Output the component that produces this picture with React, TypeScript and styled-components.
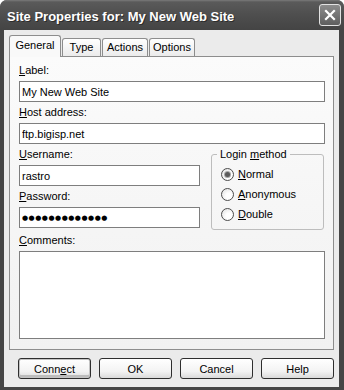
import React from "react";
import styled, { createGlobalStyle } from "styled-components";

const Global = createGlobalStyle`
  html, body { margin: 0; padding: 0; background: #ffffff; }
  body {
    font-family: "Liberation Sans", Arial, sans-serif;
    font-size: 11px;
    color: #000;
  }
`;

const Window = styled.div`
  width: 344px;
  height: 390px;
  box-sizing: border-box;
  background: #454545;
  border-radius: 7px 7px 0 0;
  display: flex;
  flex-direction: column;
  overflow: hidden;
`;

const TitleBar = styled.div`
  height: 30px;
  flex: none;
  box-sizing: border-box;
  display: flex;
  align-items: center;
  justify-content: space-between;
  padding: 0 3px 0 7px;
  background: linear-gradient(#7a7a7a 0, #5a5a5a 2px, #4e4e4e 50%, #444 100%);
`;

const Title = styled.div`
  color: #fff;
  font-weight: bold;
  font-size: 13px;
  line-height: 16px;
  padding-top: 4px;
  text-shadow: 1px 1px 0 #2c2c2c;
`;

const CloseButton = styled.div`
  width: 22px;
  height: 22px;
  box-sizing: border-box;
  border: 1px solid #e2e2e2;
  border-radius: 3px;
  background: linear-gradient(#8c8c8c, #5e5e5e);
  display: flex;
  align-items: center;
  justify-content: center;
`;

const Body = styled.div`
  flex: 1;
  margin: 0 5px 3px 4px;
  background: #ebebeb;
  padding: 5px 5px 0 5px;
  display: flex;
  flex-direction: column;
`;

const TabStrip = styled.div`
  display: flex;
  align-items: flex-end;
  gap: 1px;
  height: 21px;
  position: relative;
  z-index: 1;
`;

const Tab = styled.div<{ $active?: boolean; $w: number }>`
  width: ${(p) => p.$w}px;
  height: ${(p) => (p.$active ? 22 : 18)}px;
  margin-bottom: ${(p) => (p.$active ? -1 : 0)}px;
  box-sizing: border-box;
  text-align: center;
  line-height: 13px;
  padding-top: ${(p) => (p.$active ? 3 : 2)}px;
  border: 1px solid #8d8d8d;
  border-bottom: none;
  border-radius: 3px 3px 0 0;
  background: ${(p) => (p.$active ? "#f9f9f9" : "linear-gradient(#ffffff, #ebebeb)")};
`;

const Panel = styled.div`
  height: 294px;
  box-sizing: border-box;
  border: 1px solid #8d8d8d;
  background: linear-gradient(#fbfbfb, #f1f1f1);
  padding: 7px 8px 10px 9px;
  display: flex;
  flex-direction: column;
  gap: 4px;
`;

const Field = styled.div<{ $grow?: boolean }>`
  display: flex;
  flex-direction: column;
  gap: 4px;
  ${(p) => (p.$grow ? "flex: 1; min-height: 0;" : "")}
`;

const FieldLabel = styled.div`
  line-height: 13px;
  height: 13px;
`;

const Key = styled.span`
  text-decoration: underline;
  text-underline-offset: 1px;
`;

const TextBox = styled.input`
  width: 100%;
  height: 21px;
  box-sizing: border-box;
  border: 1px solid #7e7e7e;
  background: #fff;
  padding: 0 2px;
  margin: 0;
  font-family: "Liberation Sans", Arial, sans-serif;
  font-size: 11px;
  color: #000;
  outline: none;
`;

const PasswordBox = styled.div`
  width: 100%;
  height: 21px;
  box-sizing: border-box;
  border: 1px solid #7e7e7e;
  background: #fff;
  padding: 0 2px;
  display: flex;
  align-items: center;
  font-family: "DejaVu Sans", sans-serif;
  font-size: 7px;
  letter-spacing: 0.5px;
  color: #000;
`;

const CommentsBox = styled.textarea`
  flex: 1;
  width: 100%;
  box-sizing: border-box;
  border: 1px solid #7e7e7e;
  background: #fff;
  margin: 0;
  resize: none;
  outline: none;
`;

const CredRow = styled.div`
  display: flex;
  gap: 11px;
  align-items: flex-start;
`;

const CredColumn = styled.div`
  width: 181px;
  display: flex;
  flex-direction: column;
  gap: 4px;
`;

const Group = styled.fieldset`
  width: 113px;
  box-sizing: border-box;
  margin: 0;
  min-width: 0;
  border: 1px solid #bdbdbd;
  border-radius: 3px;
  padding: 3px 4px 5px 5px;
`;

const Legend = styled.legend`
  padding: 0 3px;
  line-height: 13px;
  font-size: 11px;
`;

const RadioRow = styled.div`
  height: 20px;
  display: flex;
  align-items: center;
  gap: 4px;
  padding-left: 4px;
`;

const RadioCircle = styled.span<{ $checked?: boolean }>`
  width: 13px;
  height: 13px;
  box-sizing: border-box;
  border-radius: 50%;
  border: 1px solid #4c4c4c;
  background: radial-gradient(circle at 65% 65%, #ffffff 30%, #dedede 100%);
  display: flex;
  align-items: center;
  justify-content: center;
  &::after {
    content: "";
    width: 5px;
    height: 5px;
    border-radius: 50%;
    background: #5a5a5a;
    box-shadow: 0 0 0 1px #a8a8a8;
    display: ${(p) => (p.$checked ? "block" : "none")};
  }
`;

const ButtonRow = styled.div`
  display: flex;
  justify-content: flex-end;
  gap: 8px;
  margin-top: 8px;
`;

const Button = styled.div<{ $default?: boolean }>`
  width: 73px;
  height: 21px;
  box-sizing: border-box;
  border: 1px solid #2e2e2e;
  border-radius: 3px;
  background: linear-gradient(#ffffff, #f3f3f3 65%, #dadada);
  display: flex;
  align-items: center;
  justify-content: center;
  ${(p) => (p.$default ? "box-shadow: inset 0 0 0 1px #c4c4c4, inset 0 -2px 0 1px #bdbdbd;" : "")}
`;

export default function App() {
  return (
    <>
      <Global />
      <Window>
        <TitleBar>
          <Title>Site Properties for: My New Web Site</Title>
          <CloseButton>
            <svg width="14" height="14" viewBox="0 0 14 14">
              <path d="M3 3 L11 11 M11 3 L3 11" stroke="#fff" strokeWidth="2.2" strokeLinecap="square" />
            </svg>
          </CloseButton>
        </TitleBar>
        <Body>
          <TabStrip>
            <Tab $active $w={52}>General</Tab>
            <Tab $w={39}>Type</Tab>
            <Tab $w={46}>Actions</Tab>
            <Tab $w={46}>Options</Tab>
          </TabStrip>
          <Panel>
            <Field>
              <FieldLabel><Key>L</Key>abel:</FieldLabel>
              <TextBox readOnly value="My New Web Site" />
            </Field>
            <Field>
              <FieldLabel><Key>H</Key>ost address:</FieldLabel>
              <TextBox readOnly value="ftp.bigisp.net" />
            </Field>
            <CredRow>
              <CredColumn>
                <Field>
                  <FieldLabel><Key>U</Key>sername:</FieldLabel>
                  <TextBox readOnly value="rastro" />
                </Field>
                <Field>
                  <FieldLabel><Key>P</Key>assword:</FieldLabel>
                  <PasswordBox>●●●●●●●●●●●●●</PasswordBox>
                </Field>
              </CredColumn>
              <Group>
                <Legend>Login <Key>m</Key>ethod</Legend>
                <RadioRow><RadioCircle $checked /><span><Key>N</Key>ormal</span></RadioRow>
                <RadioRow><RadioCircle /><span><Key>A</Key>nonymous</span></RadioRow>
                <RadioRow><RadioCircle /><span><Key>D</Key>ouble</span></RadioRow>
              </Group>
            </CredRow>
            <Field $grow>
              <FieldLabel><Key>C</Key>omments:</FieldLabel>
              <CommentsBox readOnly value="" />
            </Field>
          </Panel>
          <ButtonRow>
            <Button $default>Conn<Key>e</Key>ct</Button>
            <Button>OK</Button>
            <Button>Cancel</Button>
            <Button>Help</Button>
          </ButtonRow>
        </Body>
      </Window>
    </>
  );
}
